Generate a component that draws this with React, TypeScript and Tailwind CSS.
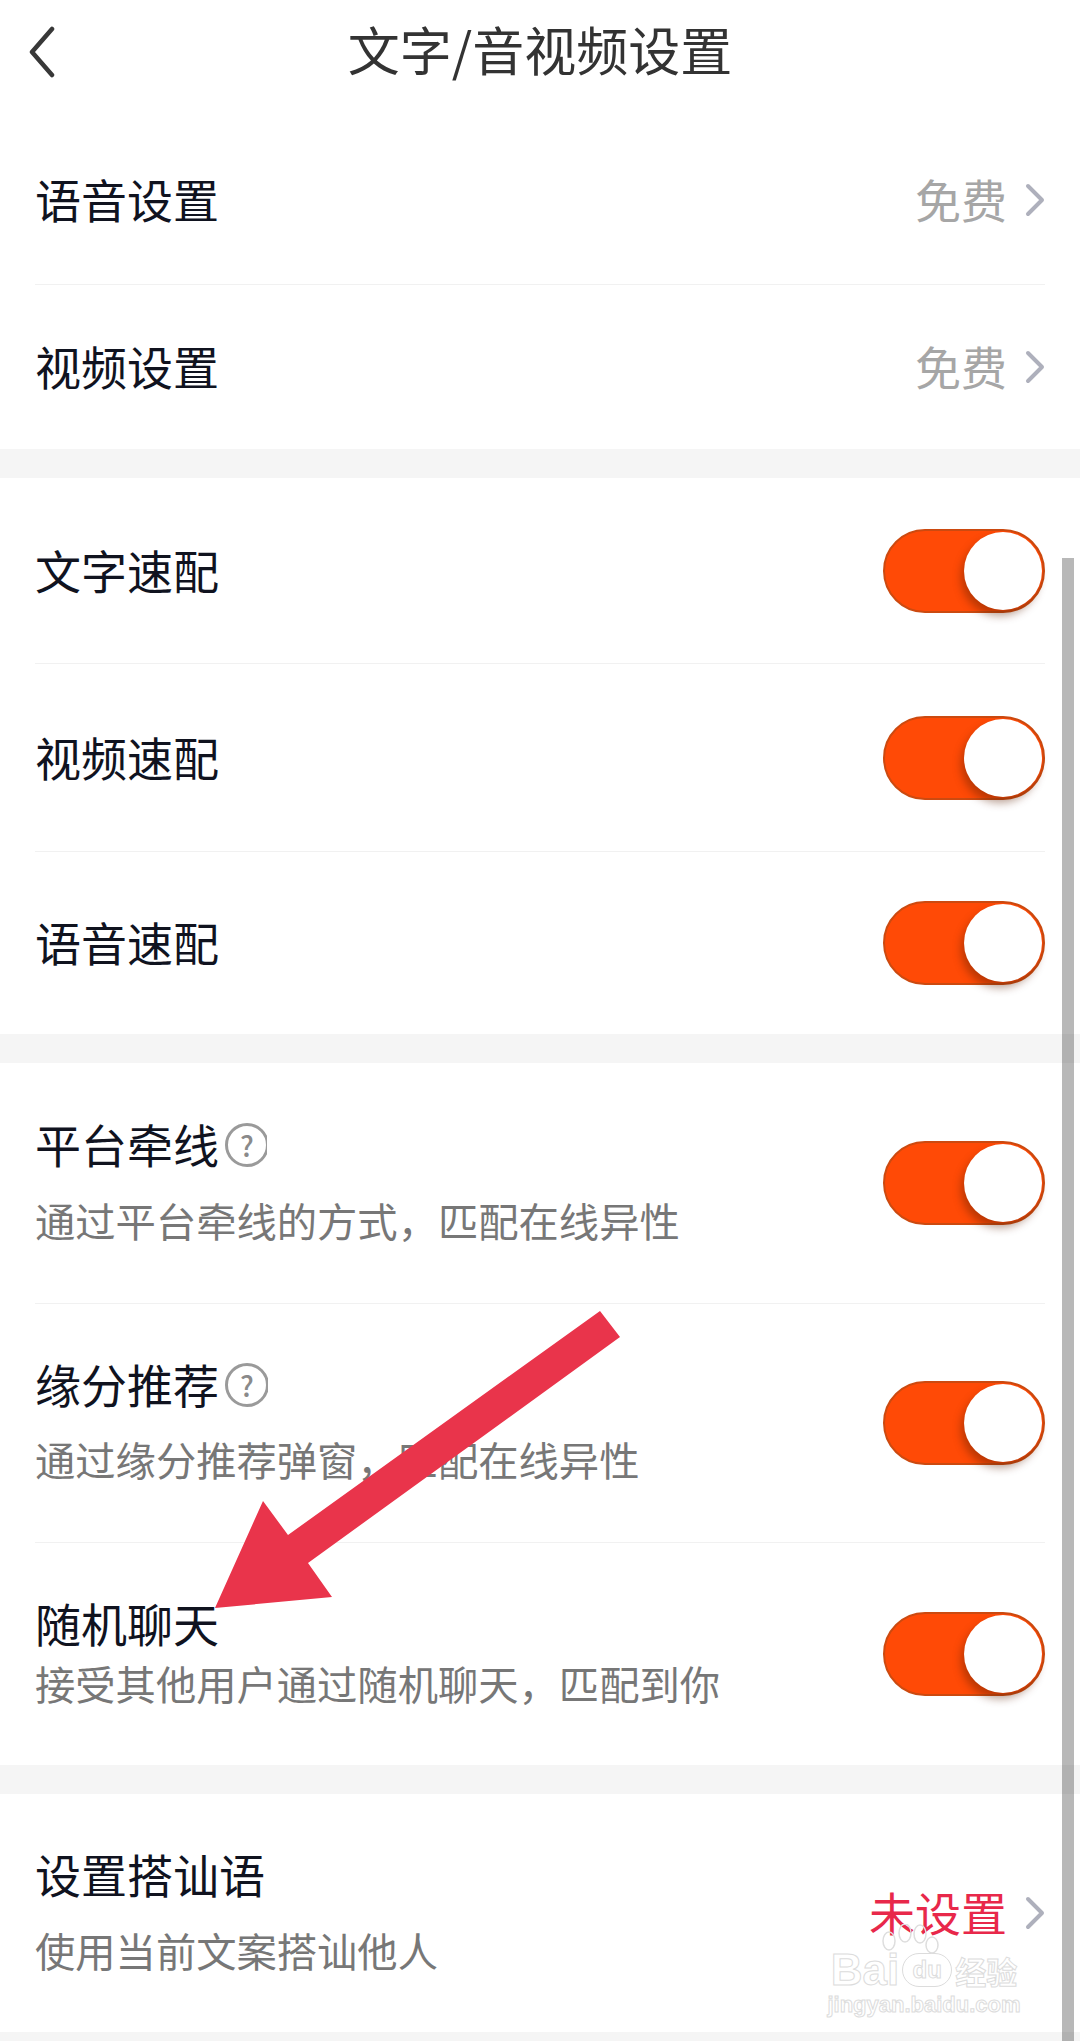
function Chevron() {
  return (
    <svg width="20" height="34" viewBox="0 0 20 34" fill="none" className="shrink-0">
      <path d="M3 3 L17 17 L3 31" stroke="#aeb0bc" strokeWidth="4" strokeLinecap="round" strokeLinejoin="round" />
    </svg>
  );
}

function Toggle() {
  return (
    <div className="relative flex h-[84px] w-[162px] shrink-0 items-center justify-end rounded-full border-2 border-[#cc4a10] bg-[#ff4a06] pr-[1px]">
      <div className="h-[78px] w-[78px] rounded-full bg-white shadow-[-3px_6px_9px_rgba(90,30,0,0.42)]" />
    </div>
  );
}

function Help({ clip }: { clip?: boolean }) {
  return (
    <div className={clip ? "mt-[4px] ml-[6px] h-[44px] w-[42px] overflow-hidden" : "mt-[4px] ml-[6px] h-[44px] w-[43px] overflow-hidden"}>
      <div className="flex h-[44px] w-[44px] items-center justify-center rounded-full border-[3px] border-[#9a9a9a] text-[28px] leading-none font-medium text-[#8a8a8a]">
        ?
      </div>
    </div>
  );
}

function Row({
  label,
  sub,
  value,
  red,
  help,
  clip,
  toggle,
  gap,
  height,
  divider,
}: {
  label: string;
  sub?: string;
  value?: string;
  red?: boolean;
  help?: boolean;
  clip?: boolean;
  toggle?: boolean;
  gap?: string;
  height: string;
  divider?: boolean;
}) {
  return (
    <div className={`flex items-center justify-between ${height} ${divider ? "border-b border-[#f1f1f1]" : ""}`}>
      <div className={`flex flex-col pb-[4px] ${gap ?? ""}`}>
        <div className="flex h-[50px] items-center text-[46px] leading-[50px] text-[#10131f]">
          {label}
          {help && <Help clip={clip} />}
        </div>
        {sub && <div className="h-[50px] text-[40.3px] leading-[50px] text-[#777777]">{sub}</div>}
      </div>
      {toggle ? (
        <Toggle />
      ) : (
        <div className="flex items-center gap-[18px]">
          <span className={red ? "pb-[4px] text-[46px] text-[#e8284a]" : "pb-[3px] text-[46px] text-[#a6a6a6]"}>{value}</span>
          <Chevron />
        </div>
      )}
    </div>
  );
}

function Watermark() {
  return (
    <div className="absolute top-[1924px] left-[826px] flex h-[96px] w-[196px] flex-col items-center font-['Liberation_Sans',sans-serif] text-white">
      <svg width="64" height="30" viewBox="0 0 64 30" fill="none" stroke="#dedede" strokeWidth="1.5" className="absolute top-0 left-[50px]">
        <ellipse cx="13" cy="17" rx="6" ry="9" />
        <ellipse cx="29" cy="9" rx="6" ry="9" />
        <ellipse cx="44" cy="10" rx="6" ry="9" />
        <ellipse cx="56" cy="21" rx="6" ry="8" />
      </svg>
      <div className="mt-[26px] flex h-[40px] items-center text-[44px] leading-none font-bold [-webkit-text-stroke:1px_#dcdcdc]">
        <span>Bai</span>
        <span className="mx-[3px] flex h-[34px] w-[50px] items-center justify-center rounded-full border border-[#dcdcdc] text-[24px]">du</span>
        <span className="font-['Noto_Sans_CJK_SC',sans-serif] text-[31px]">经验</span>
      </div>
      <div className="text-[22px] leading-[30px] font-bold [-webkit-text-stroke:1px_#dcdcdc]">jingyan.baidu.com</div>
    </div>
  );
}

export default function App() {
  return (
    <div className="relative h-[2041px] w-[1080px] overflow-hidden bg-white font-['Noto_Sans_CJK_SC',sans-serif]">
      {/* header */}
      <div className="relative flex h-[116px] items-start justify-center pt-[16px] text-[52px] leading-[66px] text-[#333333]">
        <svg width="30" height="52" viewBox="0 0 30 52" fill="none" className="absolute top-[26px] left-[27px]">
          <path d="M25 3 L5 26 L25 49" stroke="#383838" strokeWidth="4.5" strokeLinecap="round" strokeLinejoin="round" />
        </svg>
        文字/音视频设置
      </div>

      <div className="pr-[35px] pl-[35px]">
        <Row label="语音设置" value="免费" height="h-[169px]" divider />
        <Row label="视频设置" value="免费" height="h-[164px]" />
      </div>
      <div className="h-[29px] bg-[#f5f5f5]" />

      <div className="pr-[35px] pl-[35px]">
        <Row label="文字速配" toggle height="h-[186px]" divider />
        <Row label="视频速配" toggle height="h-[188px]" divider />
        <Row label="语音速配" toggle height="h-[182px]" />
      </div>
      <div className="h-[29px] bg-[#f5f5f5]" />

      <div className="pr-[35px] pl-[35px]">
        <Row label="平台牵线" help clip sub="通过平台牵线的方式，匹配在线异性" gap="gap-[27px]" toggle height="h-[241px]" divider />
        <Row label="缘分推荐" help sub="通过缘分推荐弹窗，匹配在线异性" gap="gap-[26px]" toggle height="h-[239px]" divider />
        <Row label="随机聊天" sub="接受其他用户通过随机聊天，匹配到你" gap="gap-[11px]" toggle height="h-[222px]" />
      </div>
      <div className="h-[29px] bg-[#f5f5f5]" />

      <div className="pr-[35px] pl-[35px]">
        <Row label="设置搭讪语" sub="使用当前文案搭讪他人" gap="gap-[27px]" value="未设置" red height="h-[238px]" />
      </div>
      <div className="h-[9px] bg-[#f5f5f5]" />

      {/* scrollbar */}
      <div className="absolute top-[558px] right-[6px] bottom-0 w-[12px] bg-black/[.28]" />

      <Watermark />

      {/* annotation arrow */}
      <svg width="1080" height="2041" viewBox="0 0 1080 2041" className="absolute top-0 left-0">
        <polygon points="600,1311 620,1337 308,1563 332,1597 215,1608 263,1501 288,1535" fill="#e9344b" />
      </svg>
    </div>
  );
}
